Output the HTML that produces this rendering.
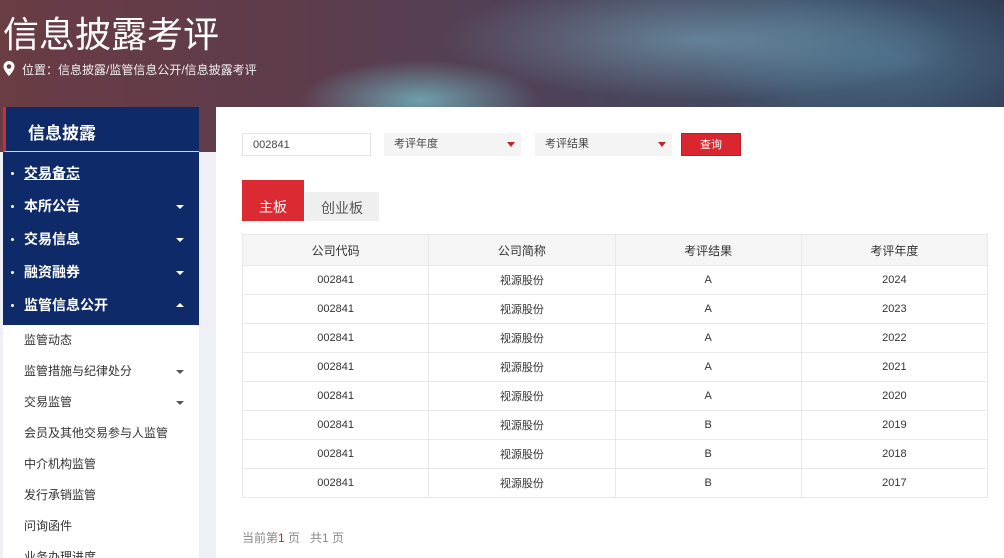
<!DOCTYPE html>
<html><head><meta charset="utf-8"><style>
*{margin:0;padding:0;box-sizing:border-box}
html,body{width:1004px;height:558px;overflow:hidden}
body{background:#eef0f6;font-family:"Liberation Sans","Noto Sans CJK SC",sans-serif;position:relative}
.hdr{position:absolute;left:0;top:0;width:1004px;height:152px;background:
radial-gradient(ellipse 120px 40px at 420px 100px,rgba(120,200,210,.7),transparent),
radial-gradient(ellipse 260px 60px at 700px 40px,rgba(140,200,220,.45),transparent),
radial-gradient(ellipse 200px 80px at 900px 60px,rgba(90,140,170,.5),transparent),
linear-gradient(90deg,#6a3c44 0%,#5d3c4c 30%,#4e4258 55%,#3e4c64 80%,#2f3a52 100%)}
.t1{position:absolute;left:3px;top:6px;color:#fff;font-size:36px}
.t2{position:absolute;left:22px;top:61px;color:#eee;font-size:12px}
.pin{position:absolute;left:3px;top:61px}
.side{position:absolute;left:3px;top:107px;width:196px;height:451px;background:#fff;overflow:hidden}
.stitle{height:45px;background:#0e2a68;border-left:3px solid #c5303a;color:#fff;font-size:17px;font-weight:bold;padding:12px 0 0 22px;border-bottom:1px solid #cfd6e6}
.nav{background:#0e2a68;padding-top:5px;height:173px}
.nav div{height:33px;line-height:33px;color:#fff;font-size:14px;font-weight:bold;padding-left:21px;position:relative}
.nav div:before{content:"";position:absolute;left:8px;top:15px;width:3px;height:3px;background:#fff;border-radius:50%}
.ar{position:absolute;right:15px;top:15px;width:0;height:0;border-left:4px solid transparent;border-right:4px solid transparent;border-top:4px solid #fff}
.up{border-top:0;border-bottom:4px solid #fff;top:14px}
.sub div{height:31px;line-height:31px;font-size:12px;color:#333;padding-left:21px;position:relative}
.sub .ar{border-top-color:#555;top:14px}
.main{position:absolute;left:216px;top:107px;width:788px;height:451px;background:#fff}
.inp{position:absolute;top:26px;height:23px;font-size:11px;color:#444;line-height:23px;padding-left:10px}
.tri{position:absolute;right:6px;top:9px;border-left:4px solid transparent;border-right:4px solid transparent;border-top:5px solid #c0242f}
table{position:absolute;left:26px;top:127px;width:746px;border-collapse:collapse;font-size:11px;color:#333;text-align:center}
td,th{border:1px solid #e8e8e8;height:29px;font-weight:normal}
th{background:#f5f5f5;font-size:12px;height:31px}
</style></head><body>
<div class="hdr"></div>
<div class="t1">信息披露考评</div>
<svg class="pin" width="12" height="15" viewBox="0 0 12 15"><path d="M6 0a5.5 5.5 0 0 0-5.5 5.5C.5 9.5 6 15 6 15s5.5-5.5 5.5-9.5A5.5 5.5 0 0 0 6 0zm0 7.8a2.3 2.3 0 1 1 0-4.6 2.3 2.3 0 0 1 0 4.6z" fill="#fff"/></svg>
<div class="t2">位置：信息披露/监管信息公开/信息披露考评</div>
<div class="side">
<div class="stitle">信息披露</div>
<div class="nav">
<div style="text-decoration:underline">交易备忘</div>
<div>本所公告<span class="ar"></span></div>
<div>交易信息<span class="ar"></span></div>
<div>融资融券<span class="ar"></span></div>
<div>监管信息公开<span class="ar up"></span></div>
</div>
<div class="sub">
<div>监管动态</div>
<div>监管措施与纪律处分<span class="ar"></span></div>
<div>交易监管<span class="ar"></span></div>
<div>会员及其他交易参与人监管</div>
<div>中介机构监管</div>
<div>发行承销监管</div>
<div>问询函件</div>
<div>业务办理进度</div>
</div>
</div>
<div class="main">
<div class="inp" style="left:26px;width:129px;border:1px solid #e3e3e3">002841</div>
<div class="inp" style="left:168px;width:137px;background:#f4f4f4">考评年度<span class="tri"></span></div>
<div class="inp" style="left:319px;width:137px;background:#f4f4f4">考评结果<span class="tri"></span></div>
<div class="inp" style="left:465px;width:60px;background:#d9262f;color:#fff;padding:0;text-align:center;border:1px solid #b81e26">查询</div>
<div style="position:absolute;left:26px;top:73px;width:62px;height:41px;background:#dc2a33;color:#fff;font-size:14px;text-align:center;line-height:54px">主板</div>
<div style="position:absolute;left:89px;top:85px;width:74px;height:29px;background:#efefef;color:#555;font-size:14px;text-align:center;line-height:32px">创业板</div>
<table>
<tr><th>公司代码</th><th>公司简称</th><th>考评结果</th><th>考评年度</th></tr>
<tr><td>002841</td><td>视源股份</td><td>A</td><td>2024</td></tr>
<tr><td>002841</td><td>视源股份</td><td>A</td><td>2023</td></tr>
<tr><td>002841</td><td>视源股份</td><td>A</td><td>2022</td></tr>
<tr><td>002841</td><td>视源股份</td><td>A</td><td>2021</td></tr>
<tr><td>002841</td><td>视源股份</td><td>A</td><td>2020</td></tr>
<tr><td>002841</td><td>视源股份</td><td>B</td><td>2019</td></tr>
<tr><td>002841</td><td>视源股份</td><td>B</td><td>2018</td></tr>
<tr><td>002841</td><td>视源股份</td><td>B</td><td>2017</td></tr>
</table>
<div style="position:absolute;left:26px;top:422px;font-size:12px;color:#888">当前第<b style="color:#c0242f;font-weight:normal">1</b> 页 &nbsp; 共1 页</div>
</div>
</body></html>
